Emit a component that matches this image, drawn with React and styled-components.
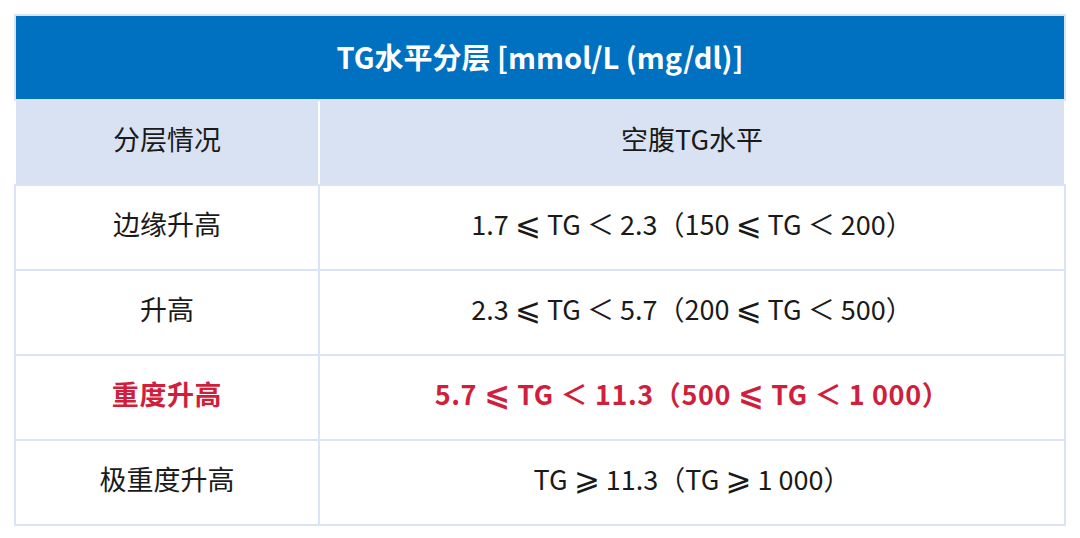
import React from 'react';
import styled, {createGlobalStyle} from 'styled-components';

const GlobalStyle = createGlobalStyle`
	body {
		margin: 0;
		background: #fff;
		font-family: "Noto Sans CJK SC", "Noto Sans", sans-serif;
	}
`;

const Table = styled.table`
	margin: 14px;
	width: 1052px;
	border-collapse: collapse;
	table-layout: fixed;
	border: 2px solid #dbe4f6;
	color: #1a1a1a;
`;

const TitleCell = styled.th`
	height: 79px;
	padding: 0 0 4px;
	background: #0070c0;
	color: #fff;
	font-size: 29px;
	font-weight: 700;
	border: 2px solid #dbe4f6;
	text-align: center;
`;

const Cell = styled.td`
	height: 75px;
	padding: 0 0 8px;
	text-align: center;
	font-size: 27px;
	font-weight: ${p => (p.$hot ? 700 : 400)};
	letter-spacing: ${p => (p.$hot ? '0.6px' : '0')};
	color: ${p => (p.$hot ? '#d01f3c' : 'inherit')};
	background: ${p => (p.$head ? '#d9e2f3' : '#fff')};
	border: 2px solid #dbe4f6;
	${p => p.$head && 'border-left-color: #fff; border-right-color: #fff;'}
	white-space: nowrap;
`;

const Sym = styled.span`
	font-family: "DejaVu Sans", sans-serif;
	font-size: 1.15em;
	line-height: 1;
`;

const rows = [
	{name: '边缘升高', lo: '1.7', hi: '2.3', lo2: '150', hi2: '200'},
	{name: '升高', lo: '2.3', hi: '5.7', lo2: '200', hi2: '500'},
	{name: '重度升高', lo: '5.7', hi: '11.3', lo2: '500', hi2: '1 000', hot: true},
];

export default function App() {
	return (
		<>
			<GlobalStyle/>
			<Table>
				<colgroup>
					<col style={{width: '304px'}}/>
					<col/>
				</colgroup>
				<thead>
					<tr>
						<TitleCell colSpan={2}>TG水平分层 [mmol/L (mg/dl)]</TitleCell>
					</tr>
				</thead>
				<tbody>
					<tr>
						<Cell $head>分层情况</Cell>
						<Cell $head>空腹TG水平</Cell>
					</tr>
					{rows.map(r => (
						<tr key={r.name}>
							<Cell $hot={r.hot}>{r.name}</Cell>
							<Cell $hot={r.hot}>
								{r.lo} <Sym>⩽</Sym> TG ＜ {r.hi}（{r.lo2} <Sym>⩽</Sym> TG ＜ {r.hi2}）
							</Cell>
						</tr>
					))}
					<tr>
						<Cell>极重度升高</Cell>
						<Cell>TG <Sym>⩾</Sym> 11.3（TG <Sym>⩾</Sym> 1 000）</Cell>
					</tr>
				</tbody>
			</Table>
		</>
	);
}
